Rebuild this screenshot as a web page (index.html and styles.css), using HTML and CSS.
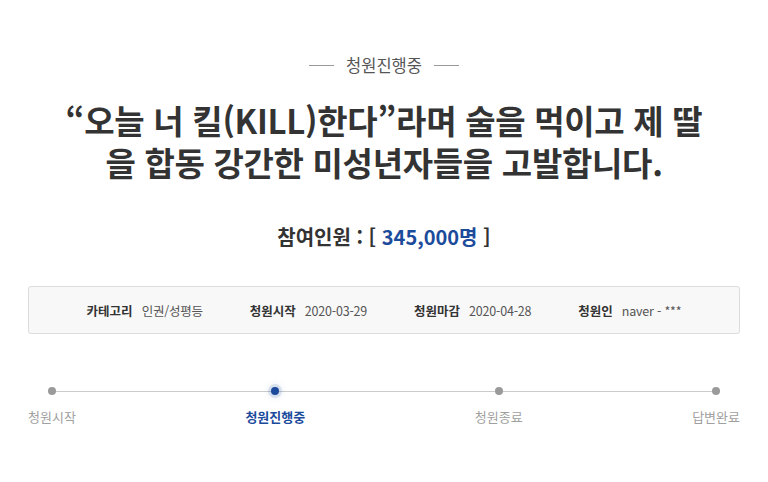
FILE: index.html
```html
<!DOCTYPE html>
<html lang="ko">
<head>
<meta charset="utf-8">
<link rel="stylesheet" href="styles.css">
</head>
<body>
<div class="page">
  <div class="status"><span class="dash"></span><span class="status-text">청원진행중</span><span class="dash"></span></div>
  <h1 class="title"><span class="line">“오늘 너 킬(KILL)한다”라며 술을 먹이고 제 딸</span><span class="line">을 합동 강간한 미성년자들을 고발합니다.</span></h1>
  <div class="count">참여인원 : [ <span class="num">345,000명</span> ]</div>
  <ul class="info">
    <li><strong>카테고리</strong><span>인권/성평등</span></li>
    <li><strong>청원시작</strong><span>2020-03-29</span></li>
    <li><strong>청원마감</strong><span>2020-04-28</span></li>
    <li><strong>청원인</strong><span>naver - ***</span></li>
  </ul>
  <ol class="steps">
    <li class="step"><i class="dot"></i><span>청원시작</span></li>
    <li class="step active"><i class="dot"></i><span>청원진행중</span></li>
    <li class="step"><i class="dot"></i><span>청원종료</span></li>
    <li class="step"><i class="dot"></i><span>답변완료</span></li>
  </ol>
</div>
</body>
</html>
```
FILE: styles.css
```css
* { box-sizing: border-box; }
html, body { margin: 0; padding: 0; background: #fff; }
body { font-family: "Noto Sans CJK KR", "Noto Sans", sans-serif; color: #333; }
.page { width: 768px; padding: 0 28px; }
.status { display: flex; align-items: center; justify-content: center; gap: 12px; padding-top: 52px; }
.status-text { font-size: 16.5px; color: #555; line-height: 26px; }
.dash { width: 25px; height: 1px; background: #999; }
.title { margin: 21px 0 0; text-align: center; font-size: 33px; line-height: 42px; font-weight: 700; color: #333; letter-spacing: -0.3px; }
.title .line { display: block; height: 42px; }
.count { margin-top: 40px; text-align: center; font-size: 20px; font-weight: 700; line-height: 28px; color: #333; }
.count .num { color: #1c4b9c; }
.info { list-style: none; margin: 35px 0 0; padding: 0; height: 48px; border: 1px solid #dcdcdc; border-radius: 3px; background: #f8f8f8; display: flex; align-items: center; justify-content: center; gap: 47px; font-size: 12.5px; }
.info li { display: flex; align-items: center; gap: 9px; }
.info strong { font-weight: 700; color: #333; }
.info span { color: #555; letter-spacing: -0.2px; }
.steps { list-style: none; margin: 53px 0 0; padding: 0; position: relative; display: flex; justify-content: space-between; }
.steps::before { content: ""; position: absolute; left: 24px; right: 24px; top: 4px; height: 1px; background: #ccc; }
.step { display: flex; flex-direction: column; align-items: center; gap: 13px; position: relative; }
.dot { display: block; width: 8px; height: 8px; border-radius: 50%; background: #9a9a9a; }
.step span { font-size: 13px; color: #a0a0a0; line-height: 18px; }
.step.active .dot { background: #1c4b9c; box-shadow: 0 0 0 3px rgba(28,75,156,0.12), 0 0 6px 3px rgba(28,75,156,0.1); }
.step.active span { color: #1c4b9c; font-weight: 700; }
```
